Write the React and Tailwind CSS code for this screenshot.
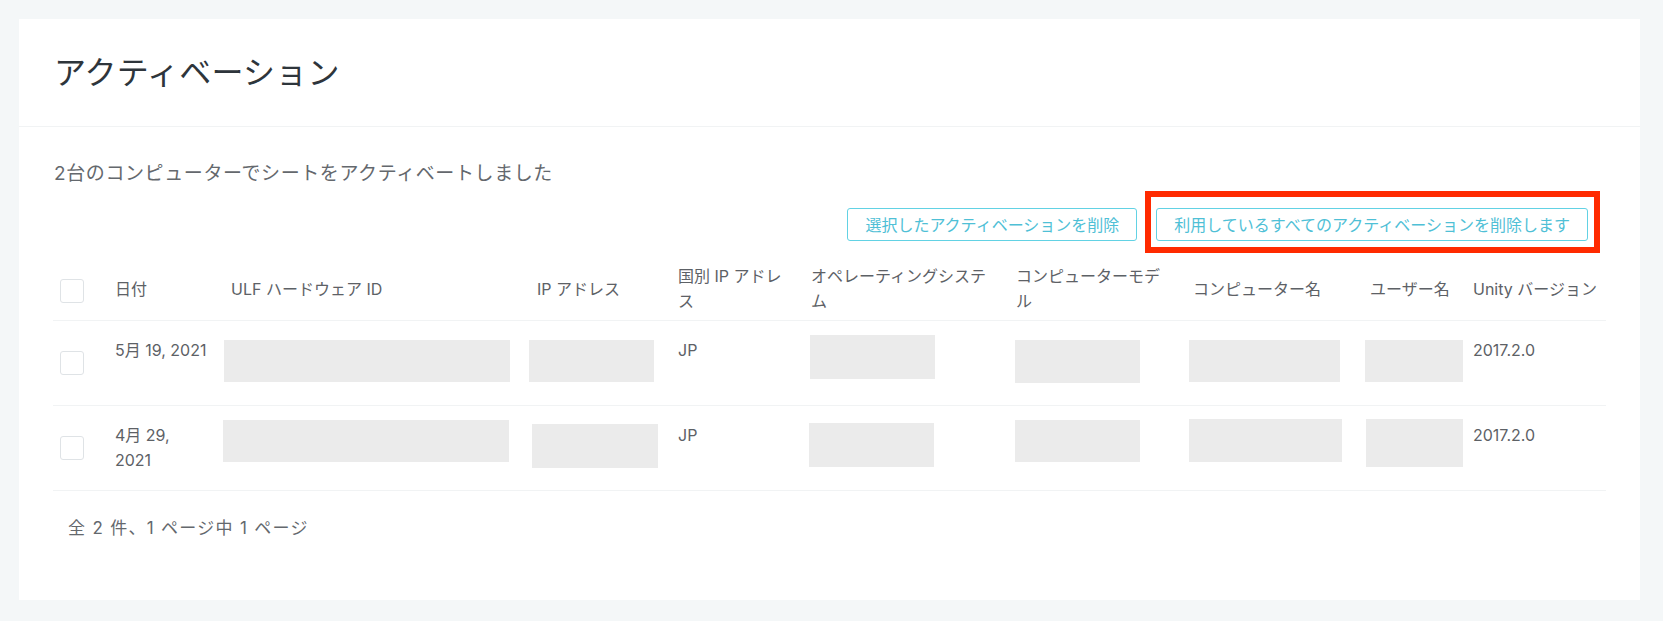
import React from "react";

const cols =
  "grid grid-cols-[54px_116px_306px_141px_133px_205px_177px_177px_103px_141px]";

const Checkbox = () => (
  <span className="block w-[24px] h-[24px] rounded-[3px] border border-[#dfe3e6] bg-white"></span>
);

const Block = ({ className }) => (
  <div className={"bg-[#ebebeb] " + className}></div>
);

const rows = [
  {
    date: "5月 19, 2021",
    blocks: [
      "mt-[19px] ml-[1px] w-[286px] h-[42px]",
      "mt-[19px] ml-[0px] w-[125px] h-[42px]",
      "mt-[14px] ml-[7px] w-[125px] h-[44px]",
      "mt-[19px] ml-[7px] w-[125px] h-[43px]",
      "mt-[19px] ml-[4px] w-[151px] h-[42px]",
      "mt-[19px] ml-[3px] w-[98px] h-[42px]",
    ],
  },
  {
    date: (
      <>
        4月 29,
        <br />
        2021
      </>
    ),
    blocks: [
      "mt-[14px] ml-[0px] w-[286px] h-[42px]",
      "mt-[18px] ml-[3px] w-[126px] h-[44px]",
      "mt-[17px] ml-[6px] w-[125px] h-[44px]",
      "mt-[14px] ml-[7px] w-[125px] h-[42px]",
      "mt-[13px] ml-[4px] w-[153px] h-[43px]",
      "mt-[13px] ml-[4px] w-[97px] h-[48px]",
    ],
  },
];

const App = () => {
  return (
    <div className="min-h-screen bg-[#f4f7f8] pt-[19px] pl-[19px] pr-[23px] pb-[21px] font-['Inter','Noto_Sans_CJK_JP',sans-serif]">
      <div className="bg-white h-[581px]">
        {/* HEADER */}
        <div className="h-[108px] flex items-center px-[35px] border-b border-[#f1f3f4]">
          <h1 className="text-[32px] font-normal text-[#2e353b] tracking-[0.2px]">
            アクティベーション
          </h1>
        </div>

        {/* CONTENT */}
        <div className="px-[34px]">
          <p className="mt-[34px] ml-[1px] text-[19px] leading-[26px] tracking-[0.6px] text-[#64686d]">
            2台のコンピューターでシートをアクティベートしました
          </p>

          <div className="flex justify-end gap-[19px] mt-[21px] pr-[18px]">
            <button className="h-[33px] px-[17px] rounded-[3px] border border-[#62d2e4] text-[16px] text-[#4fc0d6] bg-white">
              選択したアクティベーションを削除
            </button>
            <div className="relative">
              <button className="h-[33px] px-[17px] rounded-[3px] border border-[#62d2e4] text-[16px] text-[#4fc0d6] bg-white">
                利用しているすべてのアクティベーションを削除します
              </button>
              <span className="absolute top-[-17px] left-[-11px] right-[-12px] bottom-[-12px] border-[6px] border-[#ff2a00] pointer-events-none"></span>
            </div>
          </div>

          {/* TABLE */}
          <div className="mt-[17px] text-[16px] leading-[25px] text-[#5d6166]">
            <div className={cols + " h-[63px] items-center border-b border-[#f1f3f4]"}>
              <div className="pl-[7px] pt-[3px]">
                <Checkbox />
              </div>
              <div className="pl-[8px]">日付</div>
              <div className="pl-[8px]">ULF ハードウェア ID</div>
              <div className="pl-[8px]">IP アドレス</div>
              <div className="pl-[8px] pr-[8px]">国別 IP アドレス</div>
              <div className="pl-[8px] pr-[8px]">オペレーティングシステム</div>
              <div className="pl-[8px] pr-[24px]">コンピューターモデル</div>
              <div className="pl-[8px]">コンピューター名</div>
              <div className="pl-[8px]">ユーザー名</div>
              <div className="pl-[8px] whitespace-nowrap">Unity バージョン</div>
            </div>

            {rows.map((r, i) => (
              <div key={i} className={cols + " h-[85px] items-start border-b border-[#f1f3f4]"}>
                <div className="pl-[7px] self-center">
                  <Checkbox />
                </div>
                <div className="pl-[8px] pt-[17px] whitespace-nowrap">{r.date}</div>
                <Block className={r.blocks[0]} />
                <Block className={r.blocks[1]} />
                <div className="pl-[8px] pt-[17px]">JP</div>
                <Block className={r.blocks[2]} />
                <Block className={r.blocks[3]} />
                <Block className={r.blocks[4]} />
                <Block className={r.blocks[5]} />
                <div className="pl-[8px] pt-[17px]">2017.2.0</div>
              </div>
            ))}
          </div>

          <p className="mt-[25px] pl-[15px] text-[17px] leading-[25px] tracking-[1.3px] text-[#64686d]">
            全 2 件、1 ページ中 1 ページ
          </p>
        </div>
      </div>
    </div>
  );
};

export default App;
